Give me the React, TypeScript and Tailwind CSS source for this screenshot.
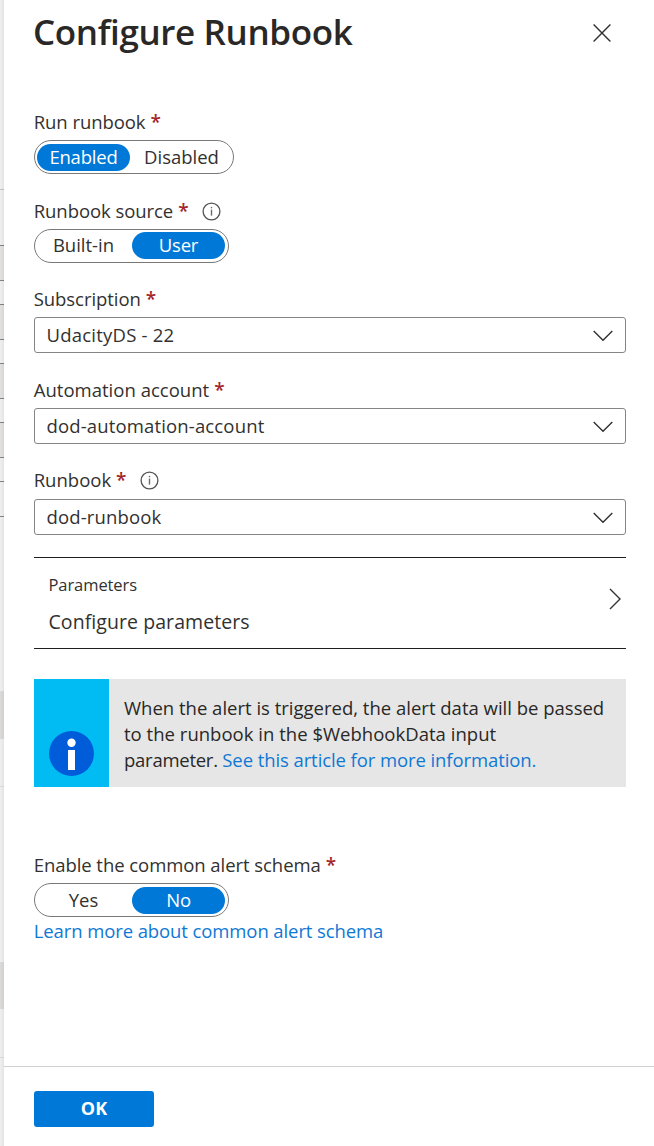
import type { ReactNode } from "react";

function InfoIcon() {
  return (
    <svg width="19" height="19" viewBox="0 0 19 19" fill="none" className="block">
      <circle cx="9.5" cy="9.5" r="8.4" stroke="#555453" strokeWidth="1.3" />
      <path d="M9.5 7.6V13.6" stroke="#6b6a69" strokeWidth="1.4" />
      <path d="M9.5 4.9V6.3" stroke="#6b6a69" strokeWidth="1.4" />
    </svg>
  );
}

function Label({ children, info, spacing = "tracking-[-0.06px]" }: { children: ReactNode; info?: boolean; spacing?: string }) {
  return (
    <div className="-ml-[0.3px] flex h-[26px] items-center whitespace-nowrap leading-[26px]">
      <span className={spacing}>{children}</span>
      <span className="ml-[5px] w-[10px] text-[19px] font-semibold text-[#a4262c]">*</span>
      {info && (
        <span className="ml-[14px]">
          <InfoIcon />
        </span>
      )}
    </div>
  );
}

function Toggle({ options, selected, className, low }: { options: string[]; selected: number; className: string; low?: boolean }) {
  return (
    <div className={`flex h-[34px] rounded-full border border-[#7a7978] pl-[2px] ${low ? "pt-[3px]" : "pt-[2px]"} ${className}`}>
      {options.map((option, i) => (
        <button
          key={option}
          className={`h-[27px] rounded-full pb-[2px] text-center leading-[25px] ${
            i === selected ? "w-[93px] bg-[#0078d7] font-medium tracking-[-0.2px] text-white" : "flex-1"
          } ${i < selected ? "pr-[2px]" : ""}`}
        >
          {option}
        </button>
      ))}
    </div>
  );
}

function Select({ value, spacing }: { value: string; spacing: string }) {
  return (
    <div className="flex h-[36px] items-center justify-between rounded-[3px] border border-[#868584] pl-[11.5px] pr-[12.5px]">
      <span className={spacing}>{value}</span>
      <svg width="20" height="12" viewBox="0 0 20 12" fill="none" className="mt-px">
        <path d="M0.7 1L10 10.3L19.3 1" stroke="#323130" strokeWidth="1.4" />
      </svg>
    </div>
  );
}

function Backdrop() {
  return (
    <svg width="4" height="1146" viewBox="0 0 4 1146" shapeRendering="crispEdges" className="shrink-0">
      <defs>
        <linearGradient id="edge" x1="0" x2="1" y1="0" y2="0">
          <stop offset="0" stopColor="#000" stopOpacity="0.04" />
          <stop offset="1" stopColor="#000" stopOpacity="0.09" />
        </linearGradient>
      </defs>
      <rect width="4" height="1146" fill="#fafafa" />
      {[245, 304, 363, 422].map((y) => (
        <rect key={y} y={y} width="4" height="36" fill="#edebe9" />
      ))}
      <rect y="691" width="4" height="48" fill="#e6e4e2" />
      <rect y="962" width="4" height="47" fill="#e6e4e2" />
      {[245, 280, 304, 339, 363, 398, 422, 457, 481, 516].map((y) => (
        <rect key={y} y={y} width="4" height="1" fill="#8a8886" />
      ))}
      <rect y="189" width="4" height="1" fill="#cccccc" />
      <rect y="786" width="4" height="1" fill="#e6e6e6" />
      <rect y="1057" width="4" height="1" fill="#e6e6e6" />
      <rect width="4" height="1146" fill="url(#edge)" />
    </svg>
  );
}

export default function App() {
  return (
    <div className="flex h-[1146px] w-[654px] overflow-hidden bg-white font-['Open_Sans',sans-serif] text-[18.5px] text-[#323130]">
      <Backdrop />
      <div className="flex min-w-0 flex-1 flex-col">
        <main className="flex h-[1066px] flex-col pl-[30px] pr-[28px]">
          <header className="flex h-[66px] items-center justify-between pr-[15px]">
            <h1 className="-ml-px pb-[2px] text-[35px] font-semibold leading-[64px] tracking-[-0.36px] text-[#292827]">Configure Runbook</h1>
            <svg width="18" height="18" viewBox="0 0 18 18" fill="none">
              <path d="M0.6 0.6L17.4 17.4M17.4 0.6L0.6 17.4" stroke="#323130" strokeWidth="1.4" />
            </svg>
          </header>

          <section className="mt-[43px] flex flex-col gap-[5px]">
            <Label>Run runbook</Label>
            <Toggle options={["Enabled", "Disabled"]} selected={0} className="w-[200px]" low />
          </section>

          <section className="mt-[24px] flex flex-col gap-[5px]">
            <Label info>Runbook source</Label>
            <Toggle options={["Built-in", "User"]} selected={1} className="w-[195px] pr-[3px]" />
          </section>

          <section className="mt-[23px] flex flex-col gap-[5px]">
            <Label>Subscription</Label>
            <Select value="UdacityDS - 22" spacing="tracking-[0.22px]" />
          </section>

          <section className="mt-[24px] flex flex-col gap-[5px]">
            <Label spacing="tracking-[0.02px]">Automation account</Label>
            <Select value="dod-automation-account" spacing="tracking-[0.15px]" />
          </section>

          <section className="mt-[23px] flex flex-col gap-[6px]">
            <Label info spacing="tracking-normal">Runbook</Label>
            <Select value="dod-runbook" spacing="tracking-[0.15px]" />
          </section>

          <section className="mt-[22px] flex h-[92px] items-center justify-between border-y border-[#201f1e] pl-[14.5px] pr-[5px]">
            <div className="mt-[2px] flex flex-col">
              <span className="text-[16.5px] leading-[24px] tracking-[-0.08px]">Parameters</span>
              <span className="mt-[12px] text-[19.5px] leading-[26px] tracking-[0.07px]">Configure parameters</span>
            </div>
            <svg width="12" height="22" viewBox="0 0 12 22" fill="none" className="mb-[9px]">
              <path d="M1 1L11 11L1 21" stroke="#323130" strokeWidth="1.4" />
            </svg>
          </section>

          <section className="mt-[30px] flex h-[108px] bg-[#e6e6e6]">
            <div className="flex w-[75px] items-end justify-center bg-[#00bcf2] pb-[11px]">
              <svg width="45" height="45" viewBox="0 0 45 45">
                <circle cx="22.5" cy="22.5" r="22.5" fill="#015cda" />
                <circle cx="22.5" cy="11.7" r="4.2" fill="#fff" />
                <rect x="19" y="19" width="7" height="20" fill="#fff" />
              </svg>
            </div>
            <p className="flex-1 whitespace-nowrap pl-[15px] pt-[16px] leading-[26px] text-[#292827]">
              When the alert is triggered, the alert data will be passed
              <br />
              <span className="tracking-[0.02px]">to the runbook in the $WebhookData input</span>
              <br />
              <span className="tracking-[-0.26px]">parameter. </span>
              <a className="tracking-[-0.09px] text-[#0f78d4]">See this article for more information.</a>
            </p>
          </section>

          <section className="mt-[65px] flex flex-col">
            <Label>Enable the common alert schema</Label>
            <div className="mt-[5px]">
              <Toggle options={["Yes", "No"]} selected={1} className="w-[195px] pr-[3px]" low />
            </div>
            <a className="-ml-[0.3px] mt-px whitespace-nowrap leading-[26px] tracking-[-0.1px] text-[#0f78d4]">Learn more about common alert schema</a>
          </section>
        </main>
        <footer className="h-[80px] border-t border-[#d2d0ce] pl-[30px] pt-[24px]">
          <button className="h-[36px] w-[120px] rounded-[3px] bg-[#0078d7] pb-[2px] text-[18px] font-bold leading-[34px] text-white">OK</button>
        </footer>
      </div>
    </div>
  );
}
